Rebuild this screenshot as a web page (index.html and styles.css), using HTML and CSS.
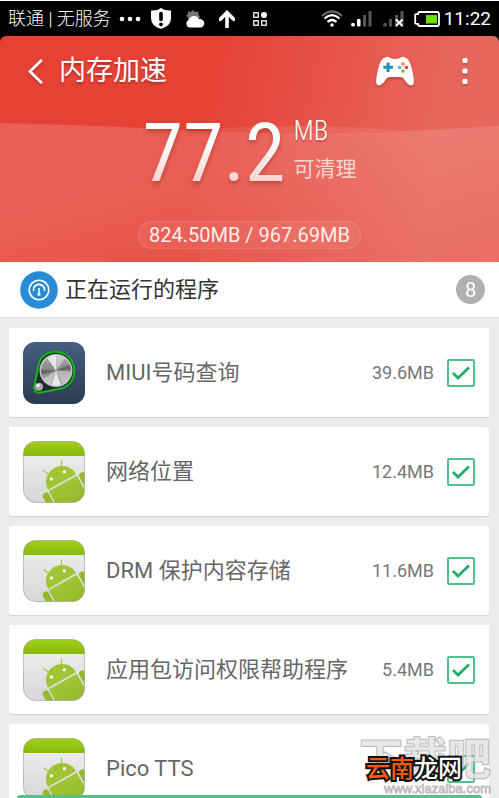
FILE: index.html
```html
<!DOCTYPE html>
<html lang="zh-CN">
<head>
  <meta charset="UTF-8">
  <meta name="viewport" content="width=device-width, initial-scale=1.0">
  <title>内存加速</title>
  <link rel="stylesheet" href="styles.css">
</head>
<body>

  <!-- Shared icons -->
  <svg class="sprite" aria-hidden="true">
    <defs>
      <linearGradient id="bar" x1="0" y1="0" x2="0" y2="1">
        <stop offset="0" stop-color="#a3d018"/>
        <stop offset="1" stop-color="#86b80e"/>
      </linearGradient>
      <linearGradient id="paper" x1="0" y1="0" x2="0" y2="1">
        <stop offset="0" stop-color="#f2f2f2"/>
        <stop offset="1" stop-color="#d6d6d6"/>
      </linearGradient>
      <linearGradient id="robot" x1="0" y1="0" x2="0" y2="1">
        <stop offset="0" stop-color="#a0c636"/>
        <stop offset="1" stop-color="#8fb524"/>
      </linearGradient>
      <clipPath id="tile"><rect x="0.5" y="0.5" width="61" height="61" rx="12"/></clipPath>
    </defs>
    <symbol id="android" viewBox="0 0 62 62">
      <g clip-path="url(#tile)">
        <rect width="62" height="62" fill="url(#paper)"/>
        <rect width="62" height="15" fill="url(#bar)"/>
        <path d="M38.5 19.5v7M20.5 29.8l4.500 3" stroke="#a4c93a" stroke-width="1.200"/>
        <g transform="translate(39 41) rotate(-29)">
          <path d="M-16 0A16 16 0 0 1 16 0Z" fill="#9fc535"/>
          <rect x="-16" y="1.600" width="32" height="34" fill="url(#robot)"/>
          <rect x="-24" y="1" width="6.600" height="26" rx="3.300" fill="#94ba29"/>
          <rect x="17.600" y="1" width="6.600" height="26" rx="3.300" fill="#94ba29"/>
          <circle cx="-7.800" cy="-7.800" r="1.600" fill="#fff"/>
          <circle cx="7" cy="-7.800" r="1.600" fill="#fff"/>
        </g>
      </g>
      <rect x="0.5" y="0.5" width="61" height="61" rx="12" fill="none" stroke="#999" stroke-opacity=".6"/>
    </symbol>
  </svg>

  <div class="app">
    <div class="status-bar">
      <span class="carrier">联通 | 无服务</span>
      <svg class="dots" width="22" height="6" viewBox="0 0 22 6" fill="#fff"><circle cx="3" cy="3" r="2.300"/><circle cx="11" cy="3" r="2.300"/><circle cx="19" cy="3" r="2.300"/></svg>
      <svg class="shield" width="20" height="22" viewBox="0 0 20 22">
        <path d="M0 2.500Q6 3 10 0Q14 3 20 2.500V10Q20 18 10 21Q0 18 0 10Z" fill="#fff"/>
        <path d="M10 5.500v6" stroke="#000" stroke-width="3.600" stroke-linecap="round"/>
        <circle cx="10" cy="16.300" r="1.900"/>
      </svg>
      <svg class="weather" width="20" height="18" viewBox="0 0 20 18">
        <path d="M8 0l2 2 3-.5.5 3L15 7l-2 3-4 2-6-2V7L1 6l2-2V1.500l3 .5z" fill="#777"/>
        <path d="M4.500 17.500A4 4 0 0 1 4 9.800 5.300 5.300 0 0 1 14 9.200 4.200 4.200 0 0 1 16 17.500Z" fill="#fff"/>
      </svg>
      <svg class="upload" width="16" height="18" viewBox="0 0 16 18" fill="none" stroke="#fff" stroke-width="3.600"><path d="M8 17V3M1.300 9.300L8 2.600l6.700 6.700" stroke-linecap="round"/></svg>
      <svg class="apps" width="16" height="16" viewBox="0 0 16 16" fill="none" stroke="#ddd" stroke-width="1.400"><path d="M1.700 1.700h4.600v4.600H1.700zM1.700 9.700h4.600v4.600H1.700zM9.700 9.700h4.600v4.600H9.700z"/><circle cx="12" cy="4" r="3" fill="#fff" stroke="none"/></svg>

      <svg class="wifi" width="22" height="17" viewBox="0 0 22 17" fill="none" stroke="#fff" stroke-width="2.200">
        <path d="M1 6Q11-3 21 6" stroke="#666"/>
        <path d="M3.500 8.500Q11 1.800 18.500 8.500M6.500 12Q11 8 15.500 12"/>
        <circle cx="11" cy="15" r="1.800" fill="#fff" stroke="none"/>
      </svg>
      <svg class="signal" width="21" height="17" viewBox="0 0 21 17" fill="#fff">
        <circle cx="2" cy="14.700" r="1.900"/><rect x="6" y="9" width="3.500" height="7.500" rx="1"/>
        <path d="M12 5h3v11.500h-3zM17.500 1h3v15.500h-3z" fill="#555"/>
      </svg>
      <svg class="signal" width="21" height="17" viewBox="0 0 21 17" fill="#555">
        <circle cx="2" cy="14.700" r="1.900"/><path d="M6 9h3v7.500H6zM12 5h3v11.500h-3zM17.500 1h3v15.500h-3z"/>
        <path d="M13 9.500l6.500 6.500M19.500 9.500L13 16" stroke="#fff" stroke-width="2"/>
      </svg>
      <svg class="battery" width="26" height="16" viewBox="0 0 26 16">
        <path d="M5.500 1h17.500q2 0 2 2v10q0 2-2 2H5.500q-1.500 0-1.500-2-2.800 0-2.800-1V4Q1.200 3 4 3 4 1 5.500 1Z" fill="none" stroke="#fff" stroke-width="1.800"/>
        <rect x="12" y="4" width="11" height="8.500" fill="#66e000"/>
      </svg>
      <span class="clock">11:22</span>
    </div>

    <header class="hero">
      <svg class="wave" viewBox="0 0 499 226" preserveAspectRatio="none" aria-hidden="true">
        <defs>
          <linearGradient id="haze" x1="0" y1="0" x2="1" y2="1">
            <stop offset="0" stop-color="#fff" stop-opacity=".16"/>
            <stop offset=".4" stop-color="#fff" stop-opacity=".15"/>
            <stop offset="1" stop-color="#fff" stop-opacity=".04"/>
          </linearGradient>
        </defs>
        <path d="M0 87Q120 90 180 94 340 101 499 90V226H0Z" fill="url(#haze)"/>
        <path d="M190 94Q300 86 400 94.500 300 98 190 94Z" fill="#fff" fill-opacity=".1"/>
      </svg>
      <div class="title-bar">
        <button class="icon-btn back" aria-label="返回">
          <svg width="15" height="25" viewBox="0 0 15 25" fill="none" stroke="#fff" stroke-width="2.800" stroke-linecap="round"><path d="M13 1.800L2 12.500 13 23.200"/></svg>
        </button>
        <h1>内存加速</h1>
        <button class="icon-btn game" aria-label="游戏">
          <svg width="38" height="30" viewBox="0 0 38 30">
            <path d="M9 1.500Q11.500 0 14 2q5 1.800 10 0 2.500-2 5-.5Q33 2.500 35 10q3 10 2.800 16-.3 4.500-4.300 3Q30.500 27.500 27.500 22.500q-1-1.500-3-1.500H13.500q-2 0-3 1.500Q7.500 27.500 4.500 29 .500 30.500.200 26 0 20 3 10 5 2.500 9 1.500Z" fill="#fff"/>
            <path d="M10.600 6.500h3v3.300h3.300v3h-3.300v3.300h-3v-3.300H7.300v-3h3.300z" fill="#2590b2"/>
            <circle cx="27" cy="8" r="1.900" fill="#f9a12e"/><circle cx="23.500" cy="11.500" r="1.800" fill="#4eb5ff"/>
            <circle cx="30.500" cy="11.500" r="1.800" fill="#ff3344"/><circle cx="27" cy="15" r="1.800" fill="#82bf25"/>
          </svg>
        </button>
        <button class="icon-btn more" aria-label="更多">
          <svg width="6" height="28" viewBox="0 0 6 28" fill="#fff"><rect x=".5" y="1" width="5" height="5" rx="1.500"/><rect x=".5" y="11.500" width="5" height="5" rx="1.500"/><rect x=".5" y="22" width="5" height="5" rx="1.500"/></svg>
        </button>
      </div>

      <div class="amount">
        <span class="number">77.2</span>
        <div class="amount-side">
          <span class="unit">MB</span>
          <span class="cleanable">可清理</span>
        </div>
      </div>
      <div class="usage">824.50MB / 967.69MB</div>
    </header>

    <div class="section-head">
      <svg width="38" height="38" viewBox="0 0 38 38">
        <circle cx="19" cy="19" r="18.800" fill="#288bd5"/>
        <g fill="none" stroke="#fff" stroke-width="1.600">
          <circle cx="19" cy="19" r="9.800"/>
          <path d="M13.500 20a5.600 5.600 0 1 1 11 0"/>
          <path d="M19 17v6"/>
        </g>
        <circle cx="19" cy="23.300" r="1.500" fill="#fff"/>
      </svg>
      <h2>正在运行的程序</h2>
      <span class="count">8</span>
    </div>

    <ul class="app-list">
      <li class="card">
        <svg class="app-icon" viewBox="0 0 62 62">
          <defs>
            <linearGradient id="navy" x1="0" y1="0" x2="0" y2="1"><stop offset="0" stop-color="#465f83"/><stop offset="1" stop-color="#2b3a51"/></linearGradient>
            <linearGradient id="steel" x1="0" y1="0" x2="0" y2="1"><stop offset="0" stop-color="#aaa"/><stop offset=".5" stop-color="#888"/><stop offset="1" stop-color="#aaa"/></linearGradient>
            <clipPath id="knob"><circle cx="33" cy="28.500" r="15"/></clipPath>
          </defs>
          <rect width="62" height="62" rx="12" fill="url(#navy)"/>
          <path d="M15.500 23.500C18 6.500 42 5.500 49 19.500C55 32 49 43.500 38 46.500L18 50.500C12.500 51.500 10 47.500 11.500 43Z" fill="#1d2a30" stroke="#12b512" stroke-width="2"/>
          <circle cx="33" cy="28.500" r="16.500" fill="#c4c4c4"/>
          <g clip-path="url(#knob)">
            <circle cx="33" cy="28.500" r="15" fill="url(#steel)"/>
            <path d="M33 28.500L18 7l15-2zM33 28.500L41 52H26z" fill="#f5f5f5" fill-opacity=".85"/>
            <path d="M33 28.500L33 5l15 4zM33 28.500L24 52 10 44z" fill="#fff" fill-opacity=".4"/>
            <path d="M33 28.500L54 19v8zM33 28.500L12 27v8z" fill="#444" fill-opacity=".5"/>
            <path d="M33 28.500L54 30v14l-10 7z" fill="#fff" fill-opacity=".35"/>
          </g>
          <circle cx="16" cy="44.800" r="4" fill="#aaa"/>
          <circle cx="15" cy="43.500" r="1.800" fill="#eee"/>
        </svg>
        <label for="app1">MIUI号码查询</label>
        <span class="size">39.6MB</span>
        <input type="checkbox" id="app1" checked>
      </li>
      <li class="card">
        <svg class="app-icon"><use href="#android"/></svg>
        <label for="app2">网络位置</label>
        <span class="size">12.4MB</span>
        <input type="checkbox" id="app2" checked>
      </li>
      <li class="card">
        <svg class="app-icon"><use href="#android"/></svg>
        <label for="app3">DRM 保护内容存储</label>
        <span class="size">11.6MB</span>
        <input type="checkbox" id="app3" checked>
      </li>
      <li class="card">
        <svg class="app-icon"><use href="#android"/></svg>
        <label for="app4">应用包访问权限帮助程序</label>
        <span class="size">5.4MB</span>
        <input type="checkbox" id="app4" checked>
      </li>
      <li class="card">
        <svg class="app-icon"><use href="#android"/></svg>
        <label for="app5">Pico TTS</label>
        <input type="checkbox" id="app5" checked>
      </li>
    </ul>

    <div class="bottom-edge"></div>

    <!-- Site marks over the corner -->
    <div class="mark">
      <span class="mark-name">下载吧</span>
      <span class="mark-url">www.xiazaiba.com</span>
    </div>
    <div class="mark-top"><span>云南</span>龙网</div>
  </div>

</body>
</html>
```
FILE: styles.css
```css
* {
  margin: 0;
  padding: 0;
  box-sizing: border-box;
}

body {
  font-family: Roboto, "Noto Sans CJK SC", sans-serif;
  background: #000;
  color: #333;
}

.sprite {
  position: absolute;
  width: 0;
  height: 0;
}

.app {
  position: relative;
  display: flex;
  flex-direction: column;
  height: 100vh;
  overflow: hidden;
  background: #000;
}

/* Status bar */
.status-bar {
  display: flex;
  align-items: center;
  flex-shrink: 0;
  height: 36px;
  padding: 0 8px;
  border-top: 1px solid #fff;
  color: #fff;
}

.carrier {
  font-size: 18px;
  font-weight: 300;
  line-height: 24px;
  white-space: nowrap;
}

.dots {
  margin-left: 8px;
}

.shield {
  margin-left: 10px;
}

.weather {
  margin-left: 14px;
}

.upload {
  margin-left: 14px;
}

.apps {
  margin-left: 17px;
}

.wifi {
  margin-left: auto;
}

.signal {
  margin-left: 8px;
}

.signal + .signal {
  margin-left: 11px;
}

.battery {
  margin-left: 10px;
}

.clock {
  margin-left: 4px;
  font-size: 19px;
}

/* Red header */
.hero {
  position: relative;
  display: flex;
  flex-direction: column;
  align-items: center;
  flex-shrink: 0;
  padding-bottom: 13px;
  border-radius: 6px 6px 0 0;
  background: linear-gradient(100deg, #e54135 40%, #e8675d 85%);
  color: #fff;
}

.wave {
  position: absolute;
  inset: 0;
  width: 100%;
  height: 100%;
}

.title-bar {
  position: relative;
  display: flex;
  align-items: center;
  width: 100%;
  height: 70px;
  padding: 0 31px 0 28px;
}

.title-bar h1 {
  margin-left: 16px;
  font-size: 27px;
  font-weight: 400;
  line-height: 36px;
  text-shadow: 0 2px 2px rgba(0, 0, 0, 0.25);
}

.icon-btn {
  display: flex;
  border: none;
  background: none;
  cursor: pointer;
  filter: drop-shadow(0 2px 1px rgba(0, 0, 0, 0.2));
}

.game {
  margin-left: auto;
}

.more {
  margin-left: 48px;
}

.amount {
  position: relative;
  display: flex;
  gap: 8px;
  height: 115px;
  padding-top: 5px;
}

.number {
  font-family: "Roboto Condensed", Roboto, sans-serif;
  font-size: 82px;
  font-weight: 400;
  line-height: 84px;
  background: linear-gradient(#fff 25%, #f5bcb8 85%);
  background-clip: text;
  -webkit-background-clip: text;
  color: transparent;
  filter: drop-shadow(0 3px 2px rgba(120, 20, 10, 0.35));
}

.amount-side {
  display: flex;
  flex-direction: column;
  padding-top: 2px;
}

.unit {
  font-family: "Roboto Condensed", Roboto, sans-serif;
  font-size: 27px;
  font-weight: 300;
  line-height: 36px;
  text-shadow: 0 2px 2px rgba(120, 20, 10, 0.35);
}

.cleanable {
  font-size: 21px;
  line-height: 40px;
  color: #f9d5d2;
}

.usage {
  position: relative;
  padding: 0 10px;
  border: 1px solid rgba(255, 255, 255, 0.1);
  border-radius: 14px;
  background: rgba(255, 255, 255, 0.06);
  color: #fdeeed;
  font-size: 20px;
  line-height: 26px;
}

/* Section heading */
.section-head {
  display: flex;
  align-items: center;
  flex-shrink: 0;
  height: 56px;
  padding: 0 14px 0 20px;
  border-bottom: 1px solid #dcdcdc;
  background: #fff;
}

.section-head h2 {
  margin-left: 7px;
  font-size: 22px;
  font-weight: 400;
  line-height: 28px;
}

.count {
  width: 29px;
  height: 29px;
  margin-left: auto;
  border-radius: 50%;
  background: #b0b0b0;
  color: #fff;
  font-size: 20px;
  line-height: 31px;
  text-align: center;
}

/* Program list */
.app-list {
  display: flex;
  flex: 1;
  flex-direction: column;
  gap: 10px;
  min-height: 0;
  overflow: hidden;
  padding: 10px 10px 0 9px;
  background: #ececec;
  list-style: none;
}

.card {
  display: flex;
  align-items: center;
  flex-shrink: 0;
  height: 89px;
  padding: 0 14px;
  border-radius: 2px;
  background: #fff;
  box-shadow: 0 1px 1px rgba(0, 0, 0, 0.12);
}

.app-icon {
  flex-shrink: 0;
  width: 62px;
  height: 62px;
}

.card label {
  flex: 1;
  margin-left: 21px;
  color: #666;
  font-size: 22px;
  line-height: 28px;
  white-space: nowrap;
}

.size {
  margin-right: 13px;
  color: #777;
  font-size: 18px;
}

.card input {
  width: 28px;
  height: 28px;
  appearance: none;
  border: 2px solid #4fc28c;
  border-radius: 2px;
  cursor: pointer;
}

.card input:checked {
  background: url("data:image/svg+xml,%3Csvg xmlns='http://www.w3.org/2000/svg' viewBox='0 0 26 26'%3E%3Cpath d='M5 13l5 5L21 7.500' fill='none' stroke='%231fae6b' stroke-width='2.800'/%3E%3C/svg%3E") center / 26px 26px no-repeat;
}

.bottom-edge {
  position: absolute;
  right: 17px;
  bottom: 0;
  left: 17px;
  height: 3px;
  border-radius: 3px 3px 0 0;
  background: #4fc28e;
}

/* Corner marks */
.mark {
  position: absolute;
  right: 8px;
  bottom: 3px;
  display: flex;
  flex-direction: column;
  align-items: flex-end;
  color: rgba(225, 225, 225, 0.8);
  -webkit-text-stroke: 1px rgba(150, 150, 150, 0.6);
  pointer-events: none;
}

.mark-name {
  font-size: 44px;
  font-weight: 900;
  line-height: 46px;
}

.mark-url {
  color: #fff;
  font-family: "Liberation Sans", sans-serif;
  font-size: 13px;
  line-height: 12px;
}

.mark-top {
  position: absolute;
  right: 37px;
  bottom: 11px;
  color: #fff;
  font-size: 24px;
  font-weight: 500;
  line-height: 36px;
  -webkit-text-stroke: 4px #111;
  paint-order: stroke fill;
  pointer-events: none;
}

.mark-top span {
  color: #ff5a0c;
}
```
